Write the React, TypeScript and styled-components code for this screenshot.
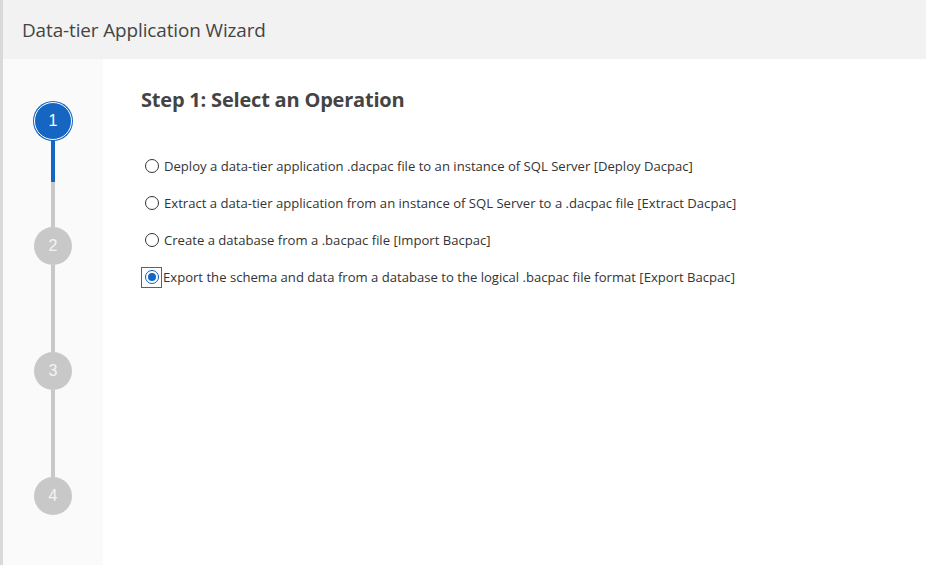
import React from "react";
import styled, { createGlobalStyle } from "styled-components";

const GlobalStyle = createGlobalStyle`
  html, body { margin: 0; padding: 0; background: #ffffff; }
  * { box-sizing: border-box; }
`;

const Frame = styled.div`
  display: flex;
  flex-direction: column;
  width: 926px;
  height: 565px;
  border-left: 3px solid #d9d9d9;
  font-family: "Open Sans", "Noto Sans", sans-serif;
  overflow: hidden;
`;

const Header = styled.header`
  height: 59px;
  flex: none;
  display: flex;
  align-items: center;
  padding-left: 19px;
  background: #f2f2f2;
`;

const Title = styled.h1`
  margin: 0;
  font-size: 18.9px;
  font-weight: 400;
  color: #444444;
  letter-spacing: -0.1px;
`;

const Body = styled.div`
  flex: 1;
  display: flex;
  min-height: 0;
`;

const Sidebar = styled.nav`
  width: 100px;
  flex: none;
  background: #fafafa;
  display: flex;
  flex-direction: column;
  align-items: center;
  padding-top: 43px;
`;

const StepCircle = styled.div<{ $active?: boolean }>`
  width: 38px;
  height: 38px;
  flex: none;
  border-radius: 50%;
  display: flex;
  align-items: center;
  justify-content: center;
  font-family: "Liberation Sans", Arial, sans-serif;
  font-size: 16px;
  color: ${(p) => (p.$active ? "#ffffff" : "#f4f4f4")};
  background: ${(p) => (p.$active ? "#1466c2" : "#c8c8c8")};
  border: ${(p) => (p.$active ? "1.5px solid #ffffff" : "none")};
  box-shadow: ${(p) => (p.$active ? "0 0 0 1px #1466c2" : "none")};
`;

const Connector = styled.div<{ $done: number }>`
  width: 4px;
  height: 87px;
  flex: none;
  background: linear-gradient(
    to bottom,
    #1466c2 0px,
    #1466c2 ${(p) => p.$done}px,
    #c8c8c8 ${(p) => p.$done}px,
    #c8c8c8 100%
  );
`;

const Main = styled.main`
  flex: 1;
  background: #ffffff;
  padding: 28px 0 0 38px;
`;

const Heading = styled.h2`
  margin: 0 0 43px 0;
  font-size: 20px;
  font-weight: 700;
  color: #444444;
  line-height: 26px;
  letter-spacing: -0.2px;
`;

const OptionList = styled.div`
  display: flex;
  flex-direction: column;
  gap: 17px;
`;

const Option = styled.label`
  display: flex;
  align-items: center;
  height: 20px;
  font-size: 13.1px;
  color: #333333;
  cursor: default;
`;

const RadioBox = styled.span<{ $focused?: boolean }>`
  width: 21px;
  height: 21px;
  flex: none;
  display: flex;
  align-items: center;
  justify-content: center;
  margin-right: ${(p) => (p.$focused ? "1px" : "2px")};
  border: 1px solid ${(p) => (p.$focused ? "#1c6ec9" : "transparent")};
`;

const RadioDot = styled.span<{ $checked?: boolean }>`
  width: 14px;
  height: 14px;
  border-radius: 50%;
  border: 1px solid ${(p) => (p.$checked ? "#0f5fbd" : "#333333")};
  background: #ffffff;
  display: flex;
  align-items: center;
  justify-content: center;
  &::after {
    content: "";
    display: ${(p) => (p.$checked ? "block" : "none")};
    width: 8px;
    height: 8px;
    border-radius: 50%;
    background: #1466c2;
  }
`;

const steps = [1, 2, 3, 4];

const options = [
  "Deploy a data-tier application .dacpac file to an instance of SQL Server [Deploy Dacpac]",
  "Extract a data-tier application from an instance of SQL Server to a .dacpac file [Extract Dacpac]",
  "Create a database from a .bacpac file [Import Bacpac]",
  "Export the schema and data from a database to the logical .bacpac file format [Export Bacpac]",
];

export default function App() {
  const selected = 3;
  return (
    <>
      <GlobalStyle />
      <Frame>
        <Header>
          <Title>Data-tier Application Wizard</Title>
        </Header>
        <Body>
          <Sidebar>
            {steps.map((s, i) => (
              <React.Fragment key={s}>
                <StepCircle $active={s === 1}>{s}</StepCircle>
                {i < steps.length - 1 && <Connector $done={s === 1 ? 42 : 0} />}
              </React.Fragment>
            ))}
          </Sidebar>
          <Main>
            <Heading>Step 1: Select an Operation</Heading>
            <OptionList>
              {options.map((o, i) => (
                <Option key={i}>
                  <RadioBox $focused={i === selected}>
                    <RadioDot $checked={i === selected} />
                  </RadioBox>
                  {o}
                </Option>
              ))}
            </OptionList>
          </Main>
        </Body>
      </Frame>
    </>
  );
}
